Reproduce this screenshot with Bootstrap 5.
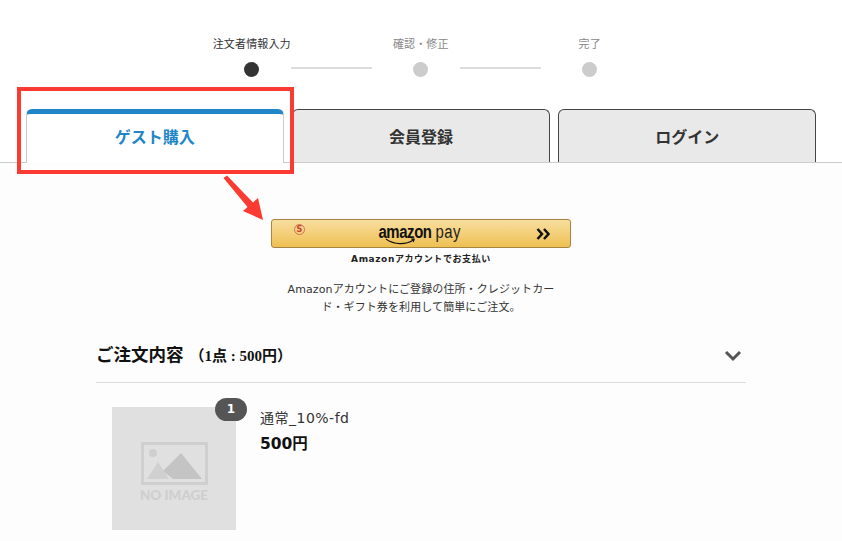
<!DOCTYPE html>
<html lang="ja">
<head>
<meta charset="UTF-8">
<meta name="viewport" content="width=device-width, initial-scale=1">
<title>ご注文手続き</title>
<link rel="stylesheet" href="https://cdn.jsdelivr.net/npm/bootstrap@5.3.0/dist/css/bootstrap.min.css">
<style>
html, body { height: 541px; overflow: hidden; }
body { font-family: "DejaVu Sans", "Noto Sans CJK JP", sans-serif; color: #222; background: #fff; position: relative; }
.stepper { padding-top: 37px; height: 109px; margin-left: -.5px; }
.step-item { width: 169px; }
.step-label { font-size: 11px; letter-spacing: .15px; line-height: 16px; color: #888; height: 25px; }
.step-item.is-active .step-label { color: #333; }
.step-dot { width: 15px; height: 15px; border-radius: 50%; background: #ccc; margin: 0 auto; }
.step-item.is-active .step-dot { background: #333; }
.step-line { width: 81px; height: 2px; background: #ddd; position: absolute; left: 123.500px; top: 30px; }
.tab-row { height: 54px; padding: 0 26px; gap: 8.5px; border-bottom: 1px solid #ccc; }
.tab-item { flex: 1; height: 53px; background: #e9e9e9; border: 1px solid #444; border-bottom: 0; border-radius: 6px 6px 0 0; font-size: 16px; font-weight: 700; color: #333; font-family: "Noto Sans CJK JP", sans-serif; }
.tab-item.is-current { background: #fff; color: #2185c9; border: 1px solid #ccc; border-top: 5px solid #2185c9; border-bottom: 0; height: 54px; position: relative; margin-bottom: -1px; padding-bottom: 5px; }
.page-body { background: #fdfdfd; height: 378px; }
.pay-btn { width: 300px; height: 29px; margin-top: 56px; position: relative; border: 1px solid #a5843f; border-radius: 3px; background: linear-gradient(#f8dea0, #efc052); }
.pay-mark { position: absolute; left: 22px; top: 4px; width: 11px; height: 11px; border: 1px solid #d0705a; border-radius: 50%; color: #c8452c; font-size: 8px; font-weight: 700; line-height: 9px; text-align: center; }
.pay-logo { font-family: "Liberation Sans", sans-serif; font-size: 18px; line-height: 24px; color: #111; letter-spacing: -0.3px; position: relative; margin-left: -2px; transform: scaleX(.83); }
.pay-logo b { letter-spacing: -0.5px; }
.pay-logo span { font-weight: 400; color: #222; letter-spacing: .5px; }
.pay-smile { position: absolute; left: 8px; top: 18px; }
.pay-arrow { position: absolute; right: 19px; top: 8px; }
.pay-note { font-size: 9px; font-weight: 700; line-height: 12px; margin-top: 5px; letter-spacing: .6px; }
.pay-desc { width: 280px; font-size: 11px; letter-spacing: .1px; line-height: 18px; margin: 16px auto 0; color: #333; }
.order-head { width: 650px; height: 55px; padding-bottom: 2px; margin: 11px 0 0 96px; border-bottom: 1px solid #ddd; }
.order-title { font-size: 17.5px; font-weight: 700; color: #111; font-family: "Noto Sans CJK JP", sans-serif; }
.order-count { font-family: "Liberation Serif", "Noto Sans CJK JP", serif; font-size: 15px; font-weight: 700; margin-left: 6px; }
.order-item { padding: 24px 0 0 112px; }
.thumb-box { width: 124px; height: 123px; background: #e0e0e0; position: relative; }
.thumb-count { position: absolute; right: -11px; top: -9px; width: 32px; height: 23px; border-radius: 12px; background: #555; color: #fff; font-size: 12px; font-weight: 700; line-height: 23px; text-align: center; }
.thumb-text { position: absolute; left: 0; right: 0; top: 80px; font-family: Lato, sans-serif; font-size: 13.5px; font-weight: 900; color: #cfcfcf; line-height: 16px; text-align: center; }
.thumb-pic { position: absolute; left: 29px; top: 35px; }
.item-name { font-size: 14px; letter-spacing: .5px; line-height: 20px; color: #333; }
.item-price { font-size: 15.5px; font-weight: 700; line-height: 24px; color: #111; margin-top: 4px; }
.item-info { padding: 1px 0 0 24px; }
.note-box { position: absolute; left: 17px; top: 87px; width: 277px; height: 87px; border: 4px solid #fb3a32; }
.note-arrow { position: absolute; left: 222px; top: 175px; }
</style>
</head>
<body>
<div class="stepper d-flex justify-content-center">
  <div class="step-item is-active text-center position-relative">
    <div class="step-label">注文者情報入力</div>
    <div class="step-dot"></div>
    <div class="step-line"></div>
  </div>
  <div class="step-item text-center position-relative">
    <div class="step-label">確認・修正</div>
    <div class="step-dot"></div>
    <div class="step-line"></div>
  </div>
  <div class="step-item text-center">
    <div class="step-label">完了</div>
    <div class="step-dot"></div>
  </div>
</div>

<div class="tab-row d-flex align-items-start">
  <div class="tab-item is-current d-flex align-items-center justify-content-center">ゲスト購入</div>
  <div class="tab-item d-flex align-items-center justify-content-center">会員登録</div>
  <div class="tab-item d-flex align-items-center justify-content-center">ログイン</div>
</div>

<div class="page-body overflow-hidden">
  <div class="pay-btn mx-auto d-flex justify-content-center">
    <span class="pay-mark">S</span>
    <div class="pay-logo"><b>amazon</b> <span>pay</span>
      <svg class="pay-smile" width="38" height="8" viewBox="0 0 38 8"><path d="M1 1c10 6 24 6 33 1" fill="none" stroke="#111" stroke-width="1.3"/><path d="M31 0.500l5 0-1.500 4z" fill="#111"/></svg>
    </div>
    <svg class="pay-arrow" width="15" height="12" viewBox="0 0 15 12"><path d="M1.500 1l4.500 5-4.500 5M8 1l4.500 5-4.500 5" fill="none" stroke="#111" stroke-width="2.500"/></svg>
  </div>
  <div class="pay-note text-center">Amazonアカウントでお支払い</div>
  <p class="pay-desc text-center">Amazonアカウントにご登録の住所・クレジットカード・ギフト券を利用して簡単にご注文。</p>

  <div class="order-head d-flex align-items-center justify-content-between">
    <div class="order-title">ご注文内容<span class="order-count">（1点 : 500円）</span></div>
    <svg class="me-1 mt-1" width="18" height="12" viewBox="0 0 18 12"><path d="M2 2l7 7 7-7" fill="none" stroke="#555" stroke-width="3"/></svg>
  </div>

  <div class="order-item d-flex">
    <div class="thumb-box">
      <span class="thumb-count">1</span>
      <svg class="thumb-pic" width="67" height="43" viewBox="0 0 67 43">
        <rect x="1.500" y="1.500" width="64" height="40" fill="none" stroke="#cfcfcf" stroke-width="3"/>
        <circle cx="12" cy="11" r="4" fill="#cfcfcf"/>
        <path d="M6 37l11-17 11 17z" fill="#d0d0d0"/>
        <path d="M22 29l18-18 21 26h-29z" fill="#c4c4c4"/>
      </svg>
      <span class="thumb-text">NO IMAGE</span>
    </div>
    <div class="item-info">
      <div class="item-name">通常_10%-fd</div>
      <div class="item-price">500円</div>
    </div>
  </div>
</div>

<div class="note-box"></div>
<svg class="note-arrow" width="48" height="46" viewBox="0 0 48 46"><path d="M1.500 3l3.500-2.500 26 27 5-4.500 5 22-20-9 4.500-4z" fill="#fb3a32"/></svg>

<script src="https://cdn.jsdelivr.net/npm/bootstrap@5.3.0/dist/js/bootstrap.bundle.min.js"></script>
</body>
</html>
